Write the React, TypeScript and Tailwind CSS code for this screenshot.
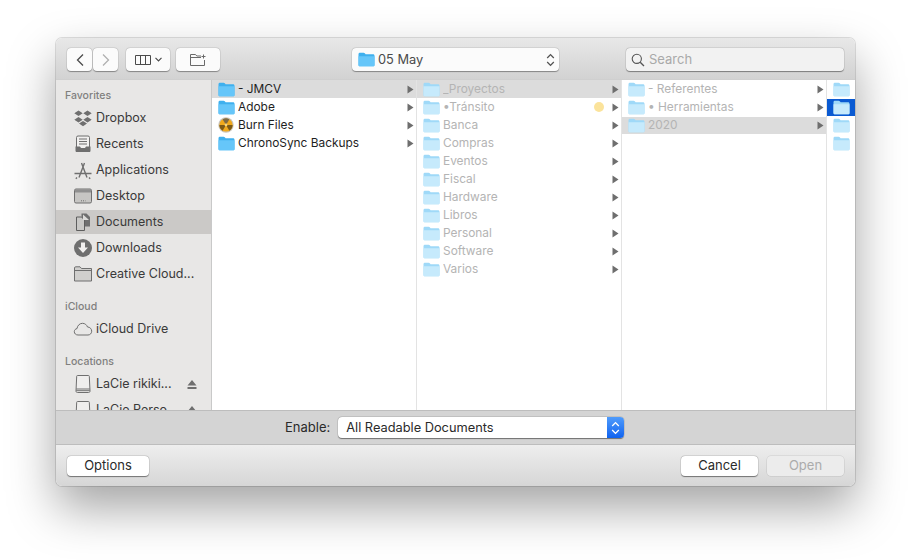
import type { ReactNode } from "react";

const font = "font-['Inter','Liberation_Sans',sans-serif]";

function Folder({ faded = false, className = "" }: { faded?: boolean; className?: string }) {
  return (
    <svg width="17" height="15" viewBox="0 0 17 15" className={`shrink-0 ${className}`}>
      <path
        d="M0.5 2.2C0.5 1.2 1.1 0.7 2 0.7H5.6C6.3 0.7 6.6 1 7 1.5L7.6 2.2H15C16 2.2 16.5 2.8 16.5 3.7V12.8C16.5 13.8 16 14.3 15 14.3H2C1.1 14.3 0.5 13.8 0.5 12.8Z"
        fill={faded ? "#9fd9f8" : "#3fb0ee"}
      />
      <path
        d="M0.5 4.3H16.5V12.8C16.5 13.8 16 14.3 15 14.3H2C1.1 14.3 0.5 13.8 0.5 12.8Z"
        fill={faded ? "#c6eafc" : "#66c6f9"}
      />
    </svg>
  );
}

function Arrow() {
  return (
    <svg width="7" height="9" viewBox="0 0 7 9" className="shrink-0">
      <path d="M0.5 0.5L6.5 4.5L0.5 8.5Z" fill="#6e6e6e" />
    </svg>
  );
}

function BurnIcon() {
  return (
    <svg width="17" height="16" viewBox="0 0 17 16" className="shrink-0">
      <circle cx="8" cy="8" r="7.7" fill="#c9c4bb" />
      <circle cx="8" cy="8" r="6.6" fill="#f0a91c" />
      <path d="M8 8L4.6 2.3A6.6 6.6 0 0 1 11.4 2.3Z" fill="#7d6a45" />
      <path d="M8 8L14.6 8A6.6 6.6 0 0 1 11.4 13.7Z" fill="#7d5a16" />
      <path d="M8 8L4.6 13.7A6.6 6.6 0 0 1 1.4 8Z" fill="#7d5a16" />
      <circle cx="8" cy="8" r="1.4" fill="#f7d67c" />
    </svg>
  );
}

function Column({ rows, width, faded, selected, dotRow }: {
  rows: string[];
  width: string;
  faded?: boolean;
  selected?: number;
  dotRow?: number;
}) {
  return (
    <div className={`${width} shrink-0 border-r border-[#e3e3e3] bg-white`}>
      {rows.map((name, i) => (
        <div
          key={name}
          className={`flex h-[18px] items-center pl-[6px] pr-[2px] ${i === selected ? "bg-[#dcdcdc]" : ""} ${i === selected && i > 0 ? "shadow-[inset_0_1px_0_#ffffff]" : ""}`}
        >
          {name === "Burn Files" ? <BurnIcon /> : <Folder faded={faded} />}
          <span className={`ml-[3px] flex-1 truncate text-[11.9px] leading-[18px] ${faded ? "text-[#b4b4b4]" : "text-[#1f1f1f]"}`}>
            {name}
          </span>
          {i === dotRow && <span className="mr-[8px] h-[10px] w-[10px] rounded-full bg-[#fbe39b]" />}
          <Arrow />
        </div>
      ))}
    </div>
  );
}

const iconProps = { width: 20, height: 20, viewBox: "0 0 20 20", className: "shrink-0" };

const icons: Record<string, ReactNode> = {
  Dropbox: (
    <svg {...iconProps}>
      <path d="M5.5 2.5L9.7 5.3L5.5 8.1L1.3 5.3ZM14.5 2.5L18.7 5.3L14.5 8.1L10.3 5.3ZM5.5 8.9L9.7 11.7L5.5 14.5L1.3 11.7ZM14.5 8.9L18.7 11.7L14.5 14.5L10.3 11.7ZM10 13L14 15.6L10 18.2L6 15.6Z" fill="#6f6f6f" />
    </svg>
  ),
  Recents: (
    <svg {...iconProps}>
      <rect x="3.5" y="2" width="13" height="13" rx="1.5" fill="#f1f0ef" stroke="#6f6f6f" />
      <path d="M6 5H14M6 7.5H14M6 10H14" stroke="#6f6f6f" />
      <path d="M2.5 12.5H7L8 14H12L13 12.5H17.5V16.5C17.5 17.5 17 18 16 18H4C3 18 2.5 17.5 2.5 16.5Z" fill="#6f6f6f" />
    </svg>
  ),
  Applications: (
    <svg {...iconProps}>
      <path d="M6 17.5L11.5 3M14 17.5L8.5 3M1.5 13.5H18.5" stroke="#6f6f6f" strokeWidth="1.4" fill="none" />
      <path d="M4 17.5L2.8 18.7M16 17.5L17.2 18.7" stroke="#6f6f6f" strokeWidth="1.4" />
    </svg>
  ),
  Desktop: (
    <svg {...iconProps}>
      <rect x="1.5" y="3" width="17" height="14" rx="1.5" fill="#c6c5c3" stroke="#6f6f6f" />
      <rect x="2" y="3.5" width="16" height="3" fill="#8f8f8f" />
      <path d="M8 14.8H12.5" stroke="#6f6f6f" strokeDasharray="1 1" />
    </svg>
  ),
  Documents: (
    <svg {...iconProps}>
      <path d="M8.5 1.5H13.5L17 5V14.5H8.5Z" fill="#6f6f6f" />
      <path d="M3.5 5H8.5L11.5 8V18.5H3.5Z" fill="#c9c8c6" stroke="#5e5e5e" />
      <path d="M10 2.5L16 8H10Z" fill="#dcdbd9" />
    </svg>
  ),
  Downloads: (
    <svg {...iconProps}>
      <circle cx="10" cy="10" r="9" fill="#6f6f6f" />
      <path d="M8 4.5H12V9.5H15L10 15L5 9.5H8Z" fill="#f1f0ef" />
    </svg>
  ),
  "Creative Cloud...": (
    <svg {...iconProps}>
      <path d="M1.5 4C1.5 3.2 2 2.8 2.7 2.8H7L8.5 4.5H18.5V17H1.5Z" fill="#d0cfcd" stroke="#6f6f6f" />
      <path d="M1.5 6.5H18.5" stroke="#6f6f6f" />
    </svg>
  ),
  "iCloud Drive": (
    <svg {...iconProps}>
      <path d="M5 16C2.8 16 1.3 14.5 1.3 12.7C1.3 11 2.5 9.8 4 9.6C4.4 6.5 6.7 4.3 9.5 4.3C12 4.3 13.8 6 14.5 8C17 8 18.7 10 18.7 12.2C18.7 14.4 17 16 15 16Z" fill="none" stroke="#6f6f6f" />
    </svg>
  ),
};

function DriveIcon() {
  return (
    <svg {...iconProps}>
      <path d="M4.5 1.5H15.5C16 1.5 16.3 1.8 16.3 2.3L17 17C17 18 16.5 18.5 15.5 18.5H4.5C3.5 18.5 3 18 3 17L3.7 2.3C3.7 1.8 4 1.5 4.5 1.5Z" fill="#efeeed" stroke="#6f6f6f" />
      <path d="M3.2 15H16.8M3.2 16.7H16.8" stroke="#6f6f6f" />
    </svg>
  );
}

function Eject() {
  return (
    <svg width="10" height="9" viewBox="0 0 10 9" className="shrink-0">
      <path d="M5 0L9.5 5.5H0.5ZM0.5 7H9.5V9H0.5Z" fill="#6f6f6f" />
    </svg>
  );
}

function SideItem({ label, active, icon, eject }: { label: string; active?: boolean; icon: ReactNode; eject?: boolean }) {
  return (
    <div className={`my-px flex h-[24px] shrink-0 items-center pl-[17px] pr-[14px] ${active ? "bg-[#cbc9c7]" : ""}`}>
      {icon}
      <span className="ml-[3px] flex-1 truncate text-[12.5px] text-[#3a3a3a]">{label}</span>
      {eject && <Eject />}
    </div>
  );
}

function SideLabel({ children, className }: { children: ReactNode; className: string }) {
  return <div className={`shrink-0 pl-[9px] text-[10.5px] font-medium leading-[14px] text-[#807f7e] ${className}`}>{children}</div>;
}

function ToolButton({ children, className = "" }: { children: ReactNode; className?: string }) {
  return (
    <div className={`flex h-[23px] items-center justify-center rounded-[4px] bg-[#fbfbfb] shadow-[0_0.5px_1px_rgba(0,0,0,0.35),0_0_0_0.5px_rgba(0,0,0,0.08)] ${className}`}>
      {children}
    </div>
  );
}

function Chevrons({ stroke = "#555555" }: { stroke?: string }) {
  return (
    <svg width="9" height="14" viewBox="0 0 9 14">
      <path d="M1.2 5L4.5 1.6L7.8 5M1.2 9L4.5 12.4L7.8 9" fill="none" stroke={stroke} strokeWidth="1.3" />
    </svg>
  );
}

function FooterButton({ label, disabled, width }: { label: string; disabled?: boolean; width: string }) {
  return (
    <div
      className={`flex h-[20px] items-center justify-center rounded-[4px] text-[13px] ${width} ${
        disabled
          ? "bg-[#ececec] text-[#ababab] shadow-[0_0_0_0.5px_rgba(0,0,0,0.12)]"
          : "bg-white text-[#2a2a2a] shadow-[0_0.5px_1px_rgba(0,0,0,0.45),0_0_0_0.5px_rgba(0,0,0,0.1)]"
      }`}
    >
      {label}
    </div>
  );
}

export default function App() {
  return (
    <div className={`h-[560px] w-[911px] overflow-hidden bg-white pl-[56px] pt-[38px] ${font}`}>
      <div className="flex h-[448px] w-[799px] flex-col overflow-hidden rounded-[6px] shadow-[0_22px_48px_rgba(0,0,0,0.36),0_0_0_1px_rgba(0,0,0,0.12)]">
        <div className="flex h-[42px] shrink-0 items-start border-b border-[#cfcfcf] bg-gradient-to-b from-[#e8e8e8] to-[#d2d2d2] pl-[11px] pr-[11px] pt-[10px]">
          <ToolButton className="w-[25px]">
            <svg width="10" height="14" viewBox="0 0 10 14"><path d="M8 1.5L2.5 7L8 12.5" fill="none" stroke="#4a4a4a" strokeWidth="1.3" /></svg>
          </ToolButton>
          <ToolButton className="ml-px w-[25px]">
            <svg width="10" height="14" viewBox="0 0 10 14"><path d="M2 1.5L7.5 7L2 12.5" fill="none" stroke="#b0b0b0" strokeWidth="1.3" /></svg>
          </ToolButton>
          <ToolButton className="ml-[8px] w-[44px] gap-[4px]">
            <svg width="16" height="10" viewBox="0 0 16 10">
              <path d="M0.5 0.5H15.5V9.5H0.5ZM5.5 0.5V9.5M10.5 0.5V9.5" fill="none" stroke="#4a4a4a" />
            </svg>
            <svg width="7" height="5" viewBox="0 0 7 5"><path d="M0.5 0.8L3.5 3.8L6.5 0.8" fill="none" stroke="#4a4a4a" strokeWidth="1.2" /></svg>
          </ToolButton>
          <ToolButton className="ml-[6px] w-[44px]">
            <svg width="17" height="12" viewBox="0 0 17 12">
              <path d="M0.5 11.5V0.5H5.5L6.8 2H11M14.5 6V11.5H0.5M0.5 3.5H11M13.5 0.5V4.5M11.5 2.5H15.5" fill="none" stroke="#6a6a6a" />
            </svg>
          </ToolButton>
          <ToolButton className="ml-[132px] w-[207px] justify-start pl-[6px] pr-[4px]">
            <Folder />
            <span className="ml-[3px] flex-1 text-[12.8px] text-[#4a4a4a]">05 May</span>
            <Chevrons />
          </ToolButton>
          <div className="ml-[67px] flex h-[23px] w-[218px] items-center rounded-[4px] bg-[#f2f2f2] pl-[5px] shadow-[0_0.5px_1px_rgba(0,0,0,0.4),0_0_0_0.5px_rgba(0,0,0,0.08)]">
            <svg width="14" height="14" viewBox="0 0 14 14">
              <circle cx="5.8" cy="5.8" r="4.6" fill="none" stroke="#555555" strokeWidth="1.1" />
              <path d="M9.2 9.2L13 13" stroke="#555555" strokeWidth="1.3" />
            </svg>
            <span className="ml-[4px] text-[13px] text-[#a9a9a9]">Search</span>
          </div>
        </div>

        <div className="flex h-[330px] shrink-0 overflow-hidden">
          <div className="flex w-[156px] shrink-0 flex-col overflow-hidden border-r border-[#c9c9c9] bg-[#e8e7e6]">
            <SideLabel className="pt-[9px] pb-[2px]">Favorites</SideLabel>
            {["Dropbox", "Recents", "Applications", "Desktop", "Documents", "Downloads", "Creative Cloud..."].map((label) => (
              <SideItem key={label} label={label} icon={icons[label]} active={label === "Documents"} />
            ))}
            <SideLabel className="pt-[13px] pb-[2px]">iCloud</SideLabel>
            <SideItem label="iCloud Drive" icon={icons["iCloud Drive"]} />
            <SideLabel className="pt-[13px] pb-[2px]">Locations</SideLabel>
            <SideItem label="LaCie rikiki..." icon={<DriveIcon />} eject />
            <SideItem label="LaCie Perso..." icon={<DriveIcon />} eject />
          </div>
          <Column width="w-[205px]" selected={0} rows={["- JMCV", "Adobe", "Burn Files", "ChronoSync Backups"]} />
          <Column
            width="w-[205px]"
            faded
            selected={0}
            dotRow={1}
            rows={["_Proyectos", "•Tránsito", "Banca", "Compras", "Eventos", "Fiscal", "Hardware", "Libros", "Personal", "Software", "Varios"]}
          />
          <Column width="w-[205px]" faded selected={2} rows={["- Referentes", "• Herramientas", "2020"]} />
          <div className="flex-1 overflow-hidden bg-white">
            {[0, 1, 2, 3].map((i) => (
              <div key={i} className={`flex h-[18px] items-center pl-[6px] ${i === 1 ? "bg-[#0a5ad2] shadow-[inset_0_1px_0_#ffffff]" : ""}`}>
                <Folder faded />
              </div>
            ))}
          </div>
        </div>

        <div className="flex h-[35px] shrink-0 items-center border-y border-[#bdbdbd] bg-[#d4d4d4] pl-[229px]">
          <span className="text-[13px] text-[#2a2a2a]">Enable:</span>
          <div className="ml-[8px] flex h-[21px] w-[286px] overflow-hidden rounded-[4px] bg-white shadow-[0_0.5px_1px_rgba(0,0,0,0.45),0_0_0_0.5px_rgba(0,0,0,0.1)]">
            <span className="flex-1 pl-[8px] text-[12.8px] leading-[21px] text-[#2a2a2a]">All Readable Documents</span>
            <div className="flex w-[17px] items-center justify-center bg-gradient-to-b from-[#4f9bfb] to-[#0e62ef]">
              <Chevrons stroke="#ffffff" />
            </div>
          </div>
        </div>

        <div className="flex flex-1 items-center justify-between bg-gradient-to-b from-[#eeeeee] to-[#d6d6d6] pl-[11px] pr-[11px]">
          <FooterButton label="Options" width="w-[82px]" />
          <div className="flex gap-[9px]">
            <FooterButton label="Cancel" width="w-[77px]" />
            <FooterButton label="Open" disabled width="w-[77px]" />
          </div>
        </div>
      </div>
    </div>
  );
}
